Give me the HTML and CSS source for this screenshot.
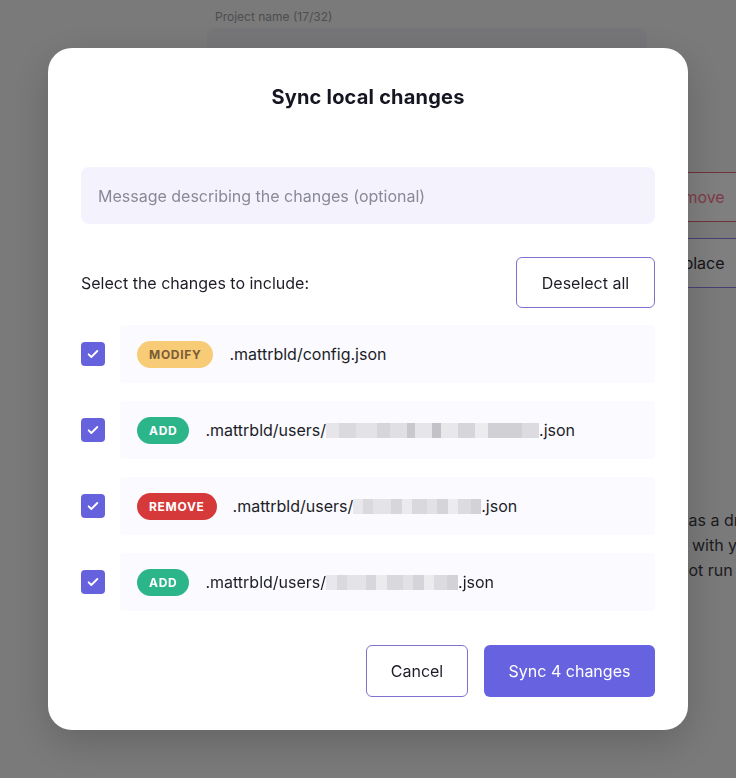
FILE: index.html
```html
<!DOCTYPE html>
<html lang="en">
<head>
<meta charset="utf-8">
<title>Sync local changes</title>
<link rel="stylesheet" href="styles.css">
</head>
<body>
<div class="page">
  <div class="main">
    <label class="field-label">Project name (17/32)</label>
    <div class="field-input"></div>
  </div>
  <div class="aside">
    <button class="ghost ghost-red">Remove</button>
    <button class="ghost ghost-indigo">Replace</button>
    <p class="aside-text">has a draft<br>s with your<br>not run the</p>
  </div>
</div>

<div class="backdrop">
  <div class="modal" role="dialog" aria-labelledby="modal-title">
    <h2 class="modal-title" id="modal-title">Sync local changes</h2>
    <input class="message" type="text" placeholder="Message describing the changes (optional)">
    <div class="select-bar">
      <span class="select-label">Select the changes to include:</span>
      <button class="btn btn-outline btn-deselect">Deselect all</button>
    </div>
    <ul class="changes">
      <li class="change">
        <span class="check"><svg viewBox="0 0 24 24" width="16" height="16"><path d="M5.5 12.5l4 4 9-9" fill="none" stroke="#fff" stroke-width="2.8" stroke-linecap="round" stroke-linejoin="round"/></svg></span>
        <div class="change-card">
          <span class="badge badge-modify">Modify</span>
          <span class="path">.mattrbld/config.json</span>
        </div>
      </li>
      <li class="change">
        <span class="check"><svg viewBox="0 0 24 24" width="16" height="16"><path d="M5.5 12.5l4 4 9-9" fill="none" stroke="#fff" stroke-width="2.8" stroke-linecap="round" stroke-linejoin="round"/></svg></span>
        <div class="change-card">
          <span class="badge badge-add">Add</span>
          <span class="path">.mattrbld/users/<span class="redact redact-a" style="width:213px"></span>.json</span>
        </div>
      </li>
      <li class="change">
        <span class="check"><svg viewBox="0 0 24 24" width="16" height="16"><path d="M5.5 12.5l4 4 9-9" fill="none" stroke="#fff" stroke-width="2.8" stroke-linecap="round" stroke-linejoin="round"/></svg></span>
        <div class="change-card">
          <span class="badge badge-remove">Remove</span>
          <span class="path">.mattrbld/users/<span class="redact redact-b" style="width:128px"></span>.json</span>
        </div>
      </li>
      <li class="change">
        <span class="check"><svg viewBox="0 0 24 24" width="16" height="16"><path d="M5.5 12.5l4 4 9-9" fill="none" stroke="#fff" stroke-width="2.8" stroke-linecap="round" stroke-linejoin="round"/></svg></span>
        <div class="change-card">
          <span class="badge badge-add">Add</span>
          <span class="path">.mattrbld/users/<span class="redact redact-c" style="width:132px"></span>.json</span>
        </div>
      </li>
    </ul>
    <div class="modal-footer">
      <button class="btn btn-outline btn-cancel">Cancel</button>
      <button class="btn btn-primary">Sync 4 changes</button>
    </div>
  </div>
</div>
</body>
</html>
```
FILE: styles.css
```css
* { box-sizing: border-box; }

html, body {
  margin: 0;
  height: 100%;
  overflow: hidden;
}

body {
  background: #f4f4f5;
  font-family: Inter, "Noto Sans", "Liberation Sans", sans-serif;
  color: #1d1d27;
}

/* background page */
.page {
  display: flex;
  width: 1000px;
  padding: 9px 0 0 207px;
}

.main {
  width: 440px;
  display: flex;
  flex-direction: column;
}

.field-label {
  font-size: 12px;
  line-height: 16px;
  color: #9c9ca2;
  padding-left: 8px;
  margin-bottom: 3px;
}

.field-input {
  height: 56px;
  background: #ececf2;
  border-radius: 8px;
}

.aside {
  padding-top: 163px;
  width: 300px;
  display: flex;
  flex-direction: column;
  align-items: flex-start;
}

.ghost {
  font: inherit;
  font-size: 16px;
  background: #fff;
  border-radius: 6px;
  padding: 0 16px;
  height: 50px;
  width: 120px;
  text-align: left;
}

.ghost-red {
  border: 1px solid #e2627a;
  color: #ff7591;
}

.ghost-indigo {
  margin-top: 16px;
  border: 1px solid #8a80e6;
  color: #2a2a33;
}

.aside-text {
  margin: 220px 0 0 32px;
  font-size: 16px;
  line-height: 25px;
  color: #3a3a42;
  white-space: nowrap;
}

/* overlay */
.backdrop {
  position: fixed;
  inset: 0;
  background: rgba(0, 0, 0, 0.5);
  display: flex;
  align-items: center;
  justify-content: center;
}

.modal {
  width: 640px;
  height: 682px;
  background: #fff;
  border-radius: 24px;
  padding: 35px 33px 33px;
  display: flex;
  flex-direction: column;
  box-shadow: 0 12px 40px rgba(0, 0, 0, 0.18);
}

.modal-title {
  margin: 0;
  text-align: center;
  font-size: 20px;
  line-height: 28px;
  font-weight: 700;
  color: #161622;
  letter-spacing: 0.2px;
}

.message {
  margin-top: 56px;
  height: 57px;
  border: 0;
  outline: 0;
  border-radius: 8px;
  background: #f3f2fd;
  padding: 0 17px;
  font: inherit;
  font-size: 16px;
  color: #1d1d27;
}

.message::placeholder {
  color: #8a8998;
}

.select-bar {
  margin-top: 33px;
  display: flex;
  align-items: center;
  justify-content: space-between;
}

.select-label {
  font-size: 16px;
  color: #1d1d27;
}

.btn {
  font: inherit;
  font-size: 16px;
  border-radius: 6px;
  cursor: pointer;
}

.btn-outline {
  background: #fff;
  border: 1px solid #7d73cf;
  color: #1d1d27;
}

.btn-deselect {
  width: 139px;
  height: 51px;
}

.changes {
  list-style: none;
  margin: 17px 0 0;
  padding: 0;
  display: flex;
  flex-direction: column;
  gap: 18px;
}

.change {
  display: flex;
  align-items: center;
  gap: 15px;
}

.check {
  width: 24px;
  height: 24px;
  flex: none;
  border-radius: 4px;
  background: #6661dc;
  display: flex;
  align-items: center;
  justify-content: center;
}

.change-card {
  flex: 1;
  height: 58px;
  background: #fafaff;
  border-radius: 4px;
  display: flex;
  align-items: center;
  padding-left: 17px;
  gap: 16px;
}

.badge {
  display: inline-flex;
  align-items: center;
  height: 27px;
  padding: 0 12px;
  border-radius: 14px;
  font-size: 12px;
  font-weight: 700;
  text-transform: uppercase;
  letter-spacing: 0.7px;
  color: #fff;
}

.badge-modify {
  background: #f8cb77;
  color: #7b5d35;
}

.badge-add {
  background: #2db58a;
}

.badge-remove {
  background: #d6393a;
}

.path {
  font-size: 16px;
  color: #1d1d27;
  display: inline-flex;
  align-items: center;
  white-space: nowrap;
}

.redact {
  display: inline-block;
  height: 15px;
  margin-top: 1px;
  background-color: #e3e3e7;
  background-image:
    linear-gradient(90deg,
      #e8e8ec 0 8%, #d9d9de 8% 16%, #e4e4e8 16% 30%, #d6d6db 30% 38%,
      #ebebee 38% 46%, #d8d8dd 46% 58%, #e2e2e6 58% 66%, #d4d4d9 66% 74%,
      #ececef 74% 82%, #dcdce0 82% 92%, #d2d2d7 92% 100%);
}

.redact-a {
  background-image:
    linear-gradient(90deg,
      #e6e6ea 0 6%, #dadade 6% 14%, #e3e3e7 14% 24%, #d5d5da 24% 30%,
      #e0e0e4 30% 38%, #c8c8cd 38% 42%, #e6e6ea 42% 50%, #c2c2c7 50% 54%,
      #e8e8eb 54% 62%, #d6d6da 62% 70%, #ececef 70% 76%, #d0d0d5 76% 92%, #dcdce0 92% 100%);
}

.modal-footer {
  margin-top: auto;
  display: flex;
  justify-content: flex-end;
  gap: 16px;
}

.btn-cancel {
  width: 102px;
  height: 52px;
}

.btn-primary {
  width: 171px;
  height: 52px;
  background: #6763e0;
  border: 0;
  color: #fff;
}
```
